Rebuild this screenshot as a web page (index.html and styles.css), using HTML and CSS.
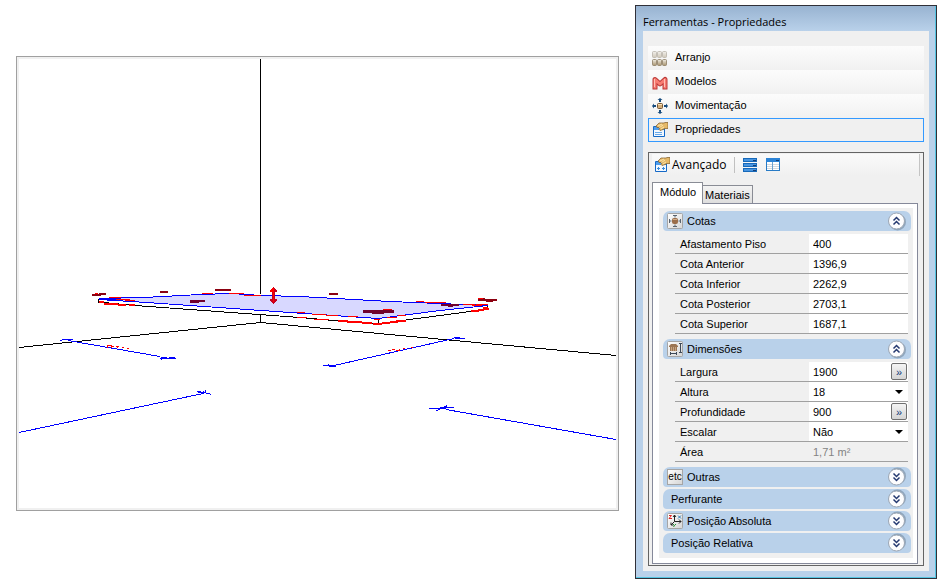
FILE: index.html
```html
<!DOCTYPE html>
<html lang="pt-BR">
<head>
<meta charset="utf-8">
<title>Ferramentas - Propriedades</title>
<link rel="stylesheet" href="styles.css">
</head>
<body>
<svg class="defs" aria-hidden="true">
  <defs>
    <linearGradient id="tan" x1="0" y1="0" x2="0" y2="1"><stop offset="0" stop-color="#f0ece3"/><stop offset="1" stop-color="#a8946f"/></linearGradient>
    <linearGradient id="tanLight" x1="0" y1="0" x2="0" y2="1"><stop offset="0" stop-color="#f2f0ec"/><stop offset="1" stop-color="#cfc7b8"/></linearGradient>
    <linearGradient id="chrome" x1="0" y1="0" x2="1" y2="1"><stop offset="0" stop-color="#ffffff"/><stop offset="1" stop-color="#d6d6d6"/></linearGradient>
  </defs>
  <symbol id="chevrons" viewBox="0 0 20 20">
    <circle cx="10.500" cy="11" r="8.500" fill="#8fa6bd"/>
    <circle cx="9.500" cy="10" r="8" fill="#fdfdfe" stroke="#9ba6b4"/>
    <path d="M6.500 9.500l3-3 3 3M6.500 13.500l3-3 3 3" fill="none" stroke="#24386f" stroke-width="1.500"/>
  </symbol>
  <symbol id="hand-sheet" viewBox="0 0 16 16">
    <path d="M1.500 4.500h11v10h-11z" fill="#f2f8ff" stroke="#1469c7"/>
    <path d="M2 5h10v3H2z" fill="#4d9ded"/>
    <path d="M4 4l3-3h5l1-.5h3v6h-3l-2 1-3 1-1-1 1-2H5z" fill="#e5b969" stroke="#7c5926" stroke-width=".7"/>
    <path d="M6 4l4-2M7 6l4-3M9 7l3-2" stroke="#fff0bd" stroke-width=".8"/>
  </symbol>
</svg>

<main class="workspace">
  <figure class="viewport">
    <svg viewBox="19 59 597 449" role="img" aria-label="Vista 3D do módulo" shape-rendering="crispEdges" fill="none">
      <path fill="#d8d8ff" d="M99 299L144 297L200 294L231 293L261 295L300 297L390 301L488 305L440 311L378 318L290 312L147 302z"/>
      <g stroke="#000">
        <path d="M260.500 59V294M260.500 314V323M19 347.500L260.500 322.500L616 355.500"/>
        <path d="M98.500 299V302L135 305.500L300 317.500L355 322.500L378 324L406 320L470 311.500L487.500 309V305M378.500 319V324"/>
      </g>
      <g stroke="#f00" stroke-width="2">
        <path d="M99 302h5M104 304h14M118 305h8M129 305h6M338 321h10M347 322h15M362 323h10M373 324h9M382 323h8M390 322h8M396 321h10M471 311h8M478 310h6M483 309h6"/>
      </g>
      <g stroke="#00f">
        <path d="M99 298.500L144 297.500L200 294.500L231 293.500L261 295.500L300 296.500L390 301.500L488 305.500M99 299.500L147 302.500L290 312.500L378 318.500L440 310.500L488 305.500M99 299h30"/>
        <path d="M60 340.500h2M62 339.500h11M68 340.500L160 356.500M160 358.500h16M162 357.500h5M169 357.500h6M161.500 357v3"/>
        <path d="M19 432.500L203 393.500M197 391.500h4M198 392.500h8M203.500 394v-3M205.500 392v-2M206 393.500h4M210 394.500h1"/>
        <path d="M323 365.500h12M329 366.500h7M328.500 364v2M334 365.500L454 338.500M454 337.500h6M455 338.500h10"/>
        <path d="M429 408.500h17M446 409.500L616 439.500M436 410.500h2M438 409.500h2M440 407.500h14M444 406.500h2M446.500 405v3"/>
      </g>
      <g stroke="#f00">
        <path d="M109 297.500h12M116 299.500h14M125 300.500h10M202 293.500h11M229 293.500h15M244 295.500h17M297 312.500h8M312 314.500h14M326 315.500h12M348 316.500h10M374 319.500h6M387 317.500h10M398 315.500h8M297 317.500h10M314 319.500h15M416 301.500h8M425 302.500h21M463 304.500h12M476 304.500h12M472 305.500h10M483 307.500h5"/>
        <path d="M107 345.500h5M107.500 345v3M111.500 346v2M112 346.500h2M116 346.500h3M117 347.500h1M122 347.500h2M127 348.500h2M388 350.500h3M392 349.500h3M396 350.500h4M399.500 349v2M403 348.500h2M411 347.500h2"/>
      </g>
      <g fill="#8b0010">
        <path d="M92 294h7v-1h7v2h-5v1h-9zM160 291h8v2h-8zM215 289h16v2h-16zM329 293h9v2h-9zM478 298h7v1h12v2h-4v1h-7v-1h-8z"/>
        <path fill="#70002c" d="M190 300h15v2h-6v1h-9zM363 310h31v3h-10v1h-12v-1h-9zM441 304h18v2h-6v1h-5v-1h-7z"/>
        <path fill="#f00" d="M95 293h3v1h-3zM478 298h5v1h-5zM383 309h9v1h-9z"/>
        <path fill="#c40020" d="M273 287h1v1h1v1h1v1h1v2h-2v7h2v2h-1v1h-1v1h-1v1h-1v-1h-1v-1h-1v-1h-1v-2h2v-7h-2v-2h1v-1h1v-1h1z"/>
        <path fill="#f00" d="M272 288h2v14h-1v-10h-3v-2h1v-1h1z"/>
      </g>
    </svg>
  </figure>

  <aside class="window">
    <h1 class="window-title">Ferramentas - Propriedades</h1>
    <div class="window-body">
      <nav class="tools" aria-label="Ferramentas">
        <button class="tool" type="button">
          <svg class="icon" viewBox="0 0 16 16"><g fill="url(#tanLight)" stroke="#b9b3a8" stroke-width=".8"><rect x=".5" y="1.500" width="4" height="6" rx="1"/><rect x="5.500" y="1.500" width="4" height="6" rx="1"/><rect x="10.500" y="1.500" width="4" height="6" rx="1"/></g><g fill="url(#tan)" stroke="#8b7b61" stroke-width=".8"><rect x=".5" y="9.500" width="4" height="6" rx="1"/><rect x="5.500" y="9.500" width="4" height="6" rx="1"/><rect x="10.500" y="9.500" width="4" height="6" rx="1"/></g></svg>
          <span>Arranjo</span>
        </button>
        <button class="tool" type="button">
          <svg class="icon" viewBox="0 0 16 16"><path d="M3 13V5.500l5 4.500 5-4.500V13" fill="none" stroke="#bc3936" stroke-width="5" stroke-linejoin="round" stroke-linecap="square"/><path d="M3 13V5.500l5 4.500 5-4.500V13" fill="none" stroke="#f77c72" stroke-width="3" stroke-linejoin="round" stroke-linecap="square"/><path d="M2.500 13V5M12.500 13V5" stroke="#ffc0b5"/></svg>
          <span>Modelos</span>
        </button>
        <button class="tool" type="button">
          <svg class="icon" viewBox="0 0 16 16"><path d="M8 0l2.500 2H9v2H7V2H5.500zM8 16l2.500-2H9v-2H7v2H5.500zM0 8l2-2.500V7h2v2H2v1.500zM16 8l-2-2.500V7h-2v2h2v1.500z" fill="#174b7d"/><rect x="5.500" y="5.500" width="5" height="5" rx="1" fill="#d6ae78" stroke="#755735"/><path d="M6 6.500h4" stroke="#f8e1ba"/></svg>
          <span>Movimentação</span>
        </button>
        <button class="tool tool-current" type="button">
          <svg class="icon" viewBox="0 0 16 16"><use href="#hand-sheet"/><path d="M3 10.500h7M3 12.500h7" stroke="#67a8e9"/></svg>
          <span>Propriedades</span>
        </button>
      </nav>

      <section class="inspector">
        <div class="toolbar">
          <button class="plain" type="button"><svg class="icon" viewBox="0 0 16 16"><use href="#hand-sheet"/><path d="M3 11.500h3M4.500 10v3M8 11.500h3M9.500 10v3" stroke="#378bdc"/></svg>Avançado</button>
          <span class="divider"></span>
          <button class="plain" type="button" aria-label="Lista"><svg class="icon" viewBox="0 0 16 16" shape-rendering="crispEdges"><path d="M1 1h14v4H1zM1 6h14v4H1zM1 11h14v4H1z" fill="#1769b9"/><path d="M2 2h12v2H2zM2 7h12v2H2zM2 12h12v2H2z" fill="#4794e0"/><path d="M11 3h3M11 8h3M11 13h3" stroke="#143e75"/></svg></button>
          <button class="plain" type="button" aria-label="Tabela"><svg class="icon" viewBox="0 0 16 16" shape-rendering="crispEdges"><path d="M1.500 1.500h13v12h-13z" fill="#fff" stroke="#287bc6"/><path d="M1 1h14v4H1z" fill="#2b83d6"/><path d="M11 3.500h3" stroke="#153d70"/><path d="M2 7.500h12M2 9.500h12M2 11.500h12" stroke="#d2d9df"/><path d="M7.500 5v8" stroke="#6da2ce"/></svg></button>
        </div>

        <div class="tabs" role="tablist">
          <button class="tab tab-current" type="button" role="tab" aria-selected="true">Módulo</button>
          <button class="tab" type="button" role="tab" aria-selected="false">Materiais</button>
        </div>

        <div class="sheet">
          <div class="groups">
            <section class="group">
              <button class="head" type="button" aria-expanded="true">
                <svg class="icon" viewBox="0 0 16 16"><rect x=".5" y=".5" width="15" height="15" rx="1" fill="url(#chrome)" stroke="#a5a5a5"/><path d="M6 2.500h4M8 2.500v2M6 13.500h4M8 11.500v2M2.500 6v4M2.500 8h2M13.500 6v4M11.500 8h2" stroke="#596572"/><rect x="5" y="5" width="6" height="6" rx="2" fill="#9b6e4a"/><path d="M6 6.500h4" stroke="#d1ab86"/></svg>
                <span>Cotas</span><svg class="chevron"><use href="#chevrons"/></svg>
              </button>
              <div class="fields">
                <div class="field"><label for="piso">Afastamento Piso</label><input id="piso" value="400"></div>
                <div class="field"><label for="anterior">Cota Anterior</label><input id="anterior" value="1396,9"></div>
                <div class="field"><label for="inferior">Cota Inferior</label><input id="inferior" value="2262,9"></div>
                <div class="field"><label for="posterior">Cota Posterior</label><input id="posterior" value="2703,1"></div>
                <div class="field"><label for="superior">Cota Superior</label><input id="superior" value="1687,1"></div>
              </div>
            </section>

            <section class="group">
              <button class="head" type="button" aria-expanded="true">
                <svg class="icon" viewBox="0 0 16 16"><rect x=".5" y=".5" width="15" height="15" rx="1" fill="url(#chrome)" stroke="#a5a5a5"/><path d="M2 5l2-2h5l2 2v1H2zM3 6h7v4H3z" fill="#9b7553"/><path d="M4.500 6v4M6.500 6v4M8.500 6v4" stroke="#c6a481"/><path d="M3 12.500h7M3.500 11v3M9.500 11v3M12 2.500h3M13.500 3v8M12 11.500h3" stroke="#3d4958"/></svg>
                <span>Dimensões</span><svg class="chevron"><use href="#chevrons"/></svg>
              </button>
              <div class="fields">
                <div class="field"><label for="largura">Largura</label><input id="largura" value="1900"><button class="more" type="button" aria-label="Editar largura">»</button></div>
                <div class="field"><label for="altura">Altura</label><select id="altura"><option>18</option></select><svg class="arrow" viewBox="0 0 8 4"><path d="M0 0h8L4 4z"/></svg></div>
                <div class="field"><label for="profundidade">Profundidade</label><input id="profundidade" value="900"><button class="more" type="button" aria-label="Editar profundidade">»</button></div>
                <div class="field"><label for="escalar">Escalar</label><select id="escalar"><option>Não</option></select><svg class="arrow" viewBox="0 0 8 4"><path d="M0 0h8L4 4z"/></svg></div>
                <div class="field"><label for="area">Área</label><input id="area" value="1,71 m²" disabled></div>
              </div>
            </section>

            <section class="group">
              <button class="head" type="button" aria-expanded="false">
                <span class="badge">etc</span>
                <span>Outras</span><svg class="chevron chevron-down"><use href="#chevrons"/></svg>
              </button>
            </section>
            <section class="group">
              <button class="head" type="button" aria-expanded="false"><span class="lead">Perfurante</span><svg class="chevron chevron-down"><use href="#chevrons"/></svg></button>
            </section>
            <section class="group">
              <button class="head" type="button" aria-expanded="false">
                <svg class="icon" viewBox="0 0 16 16"><rect x=".5" y=".5" width="15" height="15" rx="1" fill="url(#chrome)" stroke="#a5a5a5"/><path d="M7.500 2v6.500H14M7.500 8.500L4 12M6 4l1.500-2L9 4M12 6.500l2 2-2 2M4 9.500V12h2.500" fill="none" stroke="#222"/><path d="M2 2.500h2.500l-2.500 3h3" fill="none" stroke="#d22"/><path d="M11 2.500l3 3M14 2.500l-3 3" stroke="#2679b8"/><path d="M6 11l1.500 1.500L9 11M7.500 12.500L6.500 14" fill="none" stroke="#269337"/></svg>
                <span>Posição Absoluta</span><svg class="chevron chevron-down"><use href="#chevrons"/></svg>
              </button>
            </section>
            <section class="group">
              <button class="head" type="button" aria-expanded="false"><span class="lead">Posição Relativa</span><svg class="chevron chevron-down"><use href="#chevrons"/></svg></button>
            </section>
          </div>
        </div>
      </section>
    </div>
  </aside>
</main>
</body>
</html>
```

FILE: styles.css
```css
* { box-sizing: border-box; }

body {
  margin: 0;
  background: #fff;
  color: #000;
  font-family: "Liberation Sans", Arial, sans-serif;
  font-size: 11px;
  line-height: 16px;
}

button, input, select { font: inherit; color: inherit; }
button { margin: 0; text-align: left; }
svg { display: block; flex: none; }

.defs { position: absolute; width: 0; height: 0; }

.workspace {
  display: grid;
  grid-template-columns: minmax(0, 1fr) 302px;
  gap: 16px;
  align-items: start;
  padding: 5px 6px 6px 16px;
}

.viewport {
  margin: 51px 0 0;
  padding: 2px;
  border: 1px solid #a0a0a0;
  background: #f0f0f0;
}

.viewport svg { width: 100%; height: auto; background: #fff; }

.window {
  padding: 0 6px 6px 7px;
  border: 1px solid #303038;
  background: linear-gradient(#98b3d1, #b9d1ea 25px);
  box-shadow: inset -1px -1px #55c5e2;
}

.window-title {
  margin: 0;
  height: 25px;
  font: 11px/31px "Open Sans", "Noto Sans", sans-serif;
}

.window-body {
  margin: 0 1px 1px 0;
  padding: 15px 5px 5px;
  background: #f0f0f0;
}

.tools { display: grid; margin-bottom: 10px; }

.tool {
  display: flex;
  align-items: center;
  gap: 7px;
  height: 24px;
  padding: 0 3px;
  border: 1px solid transparent;
  background: linear-gradient(#fcfcfc, #f1f1f1) border-box;
}

.tool span { padding-bottom: 2px; }

.tool-current { border-color: #3399ff; background: #f0f0f0; }

.icon { width: 16px; height: 16px; }

.inspector {
  padding: 1px 5px 1px 3px;
  border: 1px solid #646464;
}

.toolbar {
  display: flex;
  align-items: center;
  gap: 7px;
  height: 22px;
  padding-left: 2px;
  margin: 0 -2px 6px 0;
  border-right: 1px solid #c4c4c4;
  background: linear-gradient(#fafafa, #f0f0f0);
}

.plain {
  display: flex;
  align-items: center;
  gap: 2px;
  padding: 0;
  border: 0;
  background: none;
  font: 12px/16px "Open Sans", "Noto Sans", sans-serif;
}

.divider { width: 1px; height: 16px; background: #c0c0c0; }

.tabs { display: flex; align-items: flex-end; height: 21px; }

.tab {
  height: 18px;
  padding: 0 2px;
  border: 1px solid #898c95;
  border-width: 1px 1px 0 0;
  background: linear-gradient(#f3f3f3, #dedede);
}

.tab-current {
  height: 22px;
  margin-bottom: -1px;
  padding: 0 6px 3px 7px;
  border-left-width: 1px;
  background: #fff;
  z-index: 1;
}

.sheet {
  padding: 4px 4px 5px 6px;
  border: 1px solid #85899a;
  background: #fff;
}

.groups {
  display: grid;
  gap: 2px;
  padding: 3px 2px 5px 4px;
  background: #f0f0f0;
}

.head {
  display: flex;
  align-items: center;
  gap: 4px;
  width: 100%;
  height: 20px;
  padding: 0 4px;
  border: 0;
  border-radius: 7px 7px 4px 4px;
  background: #b9d1ea;
}

.lead { margin-left: 4px; }

.badge {
  width: 16px;
  height: 16px;
  border: 1px solid #a5a5a5;
  background: linear-gradient(135deg, #fff, #d6d6d6);
  font-size: 10px;
  line-height: 13px;
  text-align: center;
}

.chevron { width: 20px; height: 20px; margin-left: auto; }
.chevron-down { transform: scaleY(-1); }

.fields { margin: 3px 3px 3px 12px; }

.field {
  position: relative;
  display: grid;
  grid-template-columns: 134px minmax(0, 1fr);
  height: 20px;
  border-bottom: 1px solid #a0a0a0;
}

.field label { padding-left: 5px; line-height: 20px; }

.field input, .field select {
  width: 100%;
  min-width: 0;
  height: 19px;
  margin: 0;
  padding: 0 4px;
  border: 0;
  border-radius: 0;
  background: #fff;
  appearance: none;
}

.field input:disabled { background: #f0f0f0; color: #838383; }

.more {
  position: absolute;
  top: 1px;
  right: 1px;
  width: 16px;
  height: 17px;
  padding: 0;
  border: 1px solid #707070;
  border-radius: 2px;
  background: linear-gradient(#f4f4f4, #d4d4d4);
  color: #123a78;
  line-height: 14px;
  text-align: center;
}

.arrow {
  position: absolute;
  top: 8px;
  right: 5px;
  width: 8px;
  height: 4px;
  pointer-events: none;
}
```
